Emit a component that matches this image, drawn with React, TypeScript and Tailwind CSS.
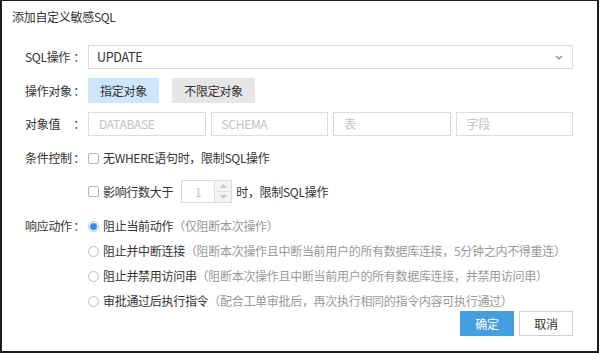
import React from "react"

function Label({ text }: { text: string }) {
  return (
    <div className="w-[60px] shrink-0 flex justify-between whitespace-nowrap text-[#333]">
      <span>{text}</span>
      <span>：</span>
    </div>
  )
}

function Checkbox() {
  return <span className="w-[11px] h-[11px] border border-[#b5b5b5] rounded-[2px] bg-white shrink-0" />
}

function Radio({ checked }: { checked?: boolean }) {
  return checked ? (
    <span className="w-[11px] h-[11px] rounded-full border border-[#9cc9f0] bg-white flex items-center justify-center shrink-0">
      <span className="w-[7px] h-[7px] rounded-full bg-[#2f8de4]" />
    </span>
  ) : (
    <span className="w-[11px] h-[11px] rounded-full border border-[#bdbdbd] bg-white shrink-0" />
  )
}

const actions = [
  { main: "阻止当前动作", note: "（仅阻断本次操作）", checked: true },
  { main: "阻止并中断连接", note: "（阻断本次操作且中断当前用户的所有数据库连接，5分钟之内不得重连）" },
  { main: "阻止并禁用访问串", note: "（阻断本次操作且中断当前用户的所有数据库连接，并禁用访问串）" },
  { main: "审批通过后执行指令", note: "（配合工单审批后，再次执行相同的指令内容可执行通过）" },
]

export default function App() {
  return (
    <div className="w-[600px] h-[353px] bg-white font-['Noto_Sans_CJK_SC','Noto_Sans',sans-serif] text-[12px] tracking-[-0.3px] leading-none">
      <div className="w-[599px] h-[353px] border-t border-l-2 border-r-2 border-b-2 border-[#1c1c1c] flex flex-col">
        <div className="h-[32px] flex items-center pl-[10px] text-[12px] text-[#333]">添加自定义敏感SQL</div>

        <div className="pt-[12px] pl-[23px] pr-[24px] flex flex-col">
          {/* SQL操作 */}
          <div className="h-[24px] flex items-center gap-[3px]">
            <Label text="SQL操作" />
            <div className="flex-1 h-[24px] border border-[#dcdcdc] flex items-center justify-between pl-[8px] pr-[9px] text-[#333] text-[12.5px]">
              <span>UPDATE</span>
              <svg width="8" height="5" viewBox="0 0 8 5">
                <path d="M1 1 L4 4 L7 1" fill="none" stroke="#888" strokeWidth="1.2" />
              </svg>
            </div>
          </div>

          {/* 操作对象 */}
          <div className="mt-[9px] h-[25px] flex items-center gap-[3px]">
            <Label text="操作对象" />
            <div className="flex gap-[13px]">
              <div className="w-[71px] h-[25px] bg-[#cde6fb] text-[#333] flex items-center justify-center">指定对象</div>
              <div className="w-[83px] h-[25px] bg-[#e6e6e6] text-[#333] flex items-center justify-center">不限定对象</div>
            </div>
          </div>

          {/* 对象值 */}
          <div className="mt-[9px] h-[24px] flex items-center gap-[3px]">
            <Label text="对象值" />
            <div className="flex-1 grid grid-cols-4 gap-[5px]">
              {["DATABASE", "SCHEMA", "表", "字段"].map((p) => (
                <div key={p} className="h-[24px] border border-[#dcdcdc] flex items-center pl-[10px] text-[#c2c2c2]">
                  {p}
                </div>
              ))}
            </div>
          </div>

          {/* 条件控制 */}
          <div className="mt-[10px] h-[24px] flex items-center gap-[3px]">
            <Label text="条件控制" />
            <div className="flex items-center gap-[4px] text-[#333]">
              <Checkbox />
              <span>无WHERE语句时，限制SQL操作</span>
            </div>
          </div>

          <div className="mt-[10px] h-[23px] flex items-center pl-[63px] text-[#333]">
            <Checkbox />
            <span className="ml-[4px]">影响行数大于</span>
            <div className="ml-[8px] w-[51px] h-[23px] border border-[#dcdcdc] flex">
              <div className="flex-1 flex items-center justify-center text-[#c2c2c2]">1</div>
              <div className="w-[17px] border-l border-[#e2e2e2] bg-[#f4f4f4] flex flex-col">
                <div className="flex-1 flex items-center justify-center border-b border-[#e2e2e2]">
                  <svg width="7" height="4" viewBox="0 0 7 4"><path d="M0 4 L3.5 0 L7 4 Z" fill="#c8c8c8" /></svg>
                </div>
                <div className="flex-1 flex items-center justify-center">
                  <svg width="7" height="4" viewBox="0 0 7 4"><path d="M0 0 L3.5 4 L7 0 Z" fill="#c8c8c8" /></svg>
                </div>
              </div>
            </div>
            <span className="ml-[4px]">时，限制SQL操作</span>
          </div>

          {/* 响应动作 */}
          <div className="mt-[13px] flex gap-[3px]">
            <div className="h-[20px] flex items-center">
              <Label text="响应动作" />
            </div>
            <div className="flex flex-col gap-[5px]">
              {actions.map((a) => (
                <div key={a.main} className="h-[20px] flex items-center gap-[4px]">
                  <Radio checked={a.checked} />
                  <span className="text-[#333] whitespace-nowrap">
                    {a.main}
                    <span className="text-[#999]">{a.note}</span>
                  </span>
                </div>
              ))}
            </div>
          </div>

          <div className="flex justify-end gap-[5px]">
            <button className="w-[54px] h-[25px] bg-[#459ee0] text-white">确定</button>
            <button className="w-[54px] h-[25px] border border-[#cfcfcf] bg-white text-[#333]">取消</button>
          </div>
        </div>
      </div>
    </div>
  )
}
